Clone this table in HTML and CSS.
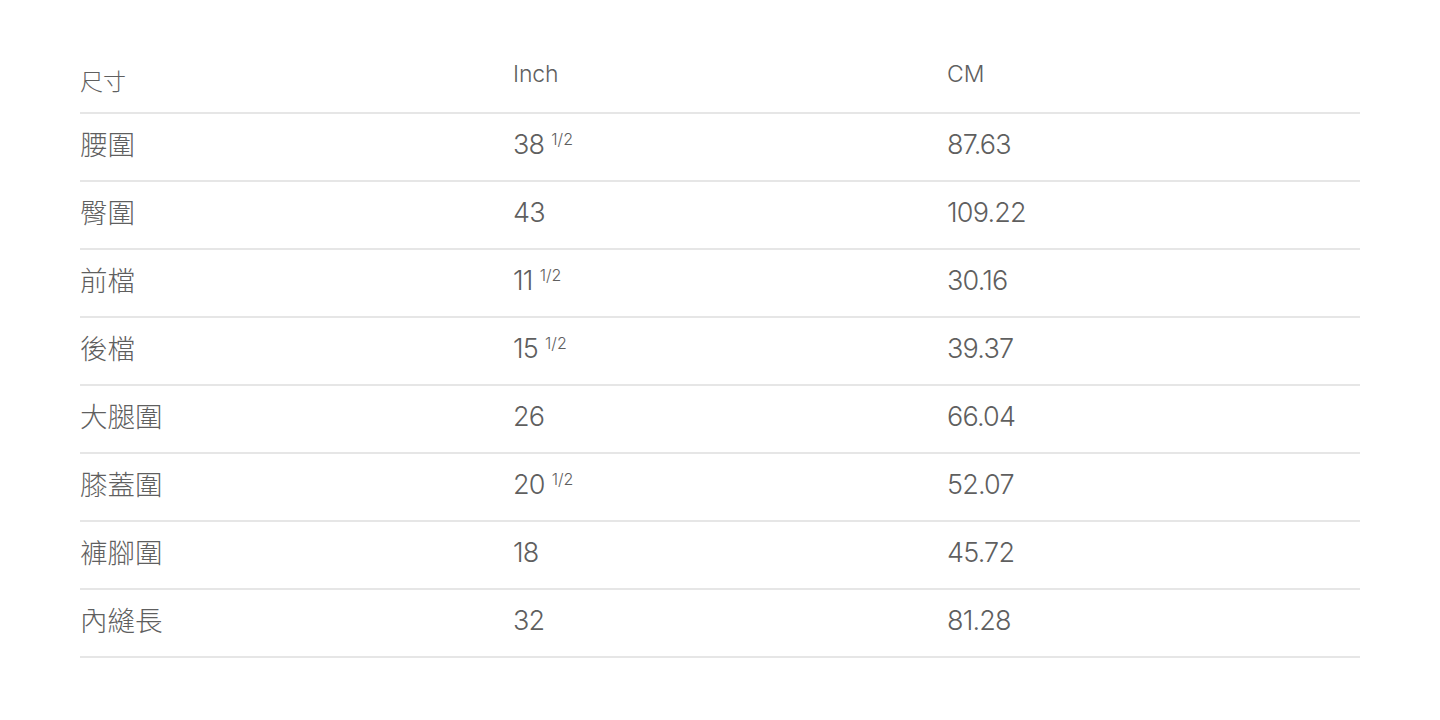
FILE: index.html
```html
<!DOCTYPE html>
<html lang="zh-Hant">
<head>
<meta charset="utf-8">
<title>尺寸表</title>
<link rel="stylesheet" href="styles.css">
</head>
<body>
<div class="page">
  <div class="size-table">
    <div class="row head">
      <div class="cell cjk label-head">尺寸</div>
      <div class="cell">Inch</div>
      <div class="cell">CM</div>
    </div>
    <div class="row"><div class="cell cjk">腰圍</div><div class="cell">38<span class="frac">1/2</span></div><div class="cell">87.63</div></div>
    <div class="row"><div class="cell cjk">臀圍</div><div class="cell">43</div><div class="cell">109.22</div></div>
    <div class="row"><div class="cell cjk">前檔</div><div class="cell">11<span class="frac">1/2</span></div><div class="cell">30.16</div></div>
    <div class="row"><div class="cell cjk">後檔</div><div class="cell">15<span class="frac">1/2</span></div><div class="cell">39.37</div></div>
    <div class="row"><div class="cell cjk">大腿圍</div><div class="cell">26</div><div class="cell">66.04</div></div>
    <div class="row"><div class="cell cjk">膝蓋圍</div><div class="cell">20<span class="frac">1/2</span></div><div class="cell">52.07</div></div>
    <div class="row"><div class="cell cjk">褲腳圍</div><div class="cell">18</div><div class="cell">45.72</div></div>
    <div class="row"><div class="cell cjk">內縫長</div><div class="cell">32</div><div class="cell">81.28</div></div>
  </div>
</div>
</body>
</html>
```
FILE: styles.css
```css
html, body {
  margin: 0;
  padding: 0;
  background: #ffffff;
}
body {
  font-family: Inter, "Noto Sans CJK TC", sans-serif;
  color: #5f5f5f;
}
.page {
  padding: 46px 80px 0 80px;
}
.size-table {
  display: flex;
  flex-direction: column;
}
.row {
  display: grid;
  grid-template-columns: 433px 434px 1fr;
  align-items: center;
  height: 60px;
  padding-bottom: 6px;
  border-bottom: 2px solid #e6e6e6;
  font-size: 27px;
  font-weight: 300;
  letter-spacing: -0.8px;
}
.row.head {
  font-size: 23px;
  letter-spacing: -0.1px;
  padding-bottom: 10px;
  height: 56px;
}
.label-head {
  padding-top: 12px;
}
.cjk {
  font-family: "Noto Sans CJK TC", sans-serif;
  font-size: 27.5px;
  font-weight: 300;
  letter-spacing: 0;
  padding-bottom: 3px;
}
.head .cjk {
  font-size: 23px;
  padding-bottom: 0;
}
.frac {
  font-size: 16px;
  vertical-align: 9px;
  margin-left: 7px;
  letter-spacing: 0;
}
```
